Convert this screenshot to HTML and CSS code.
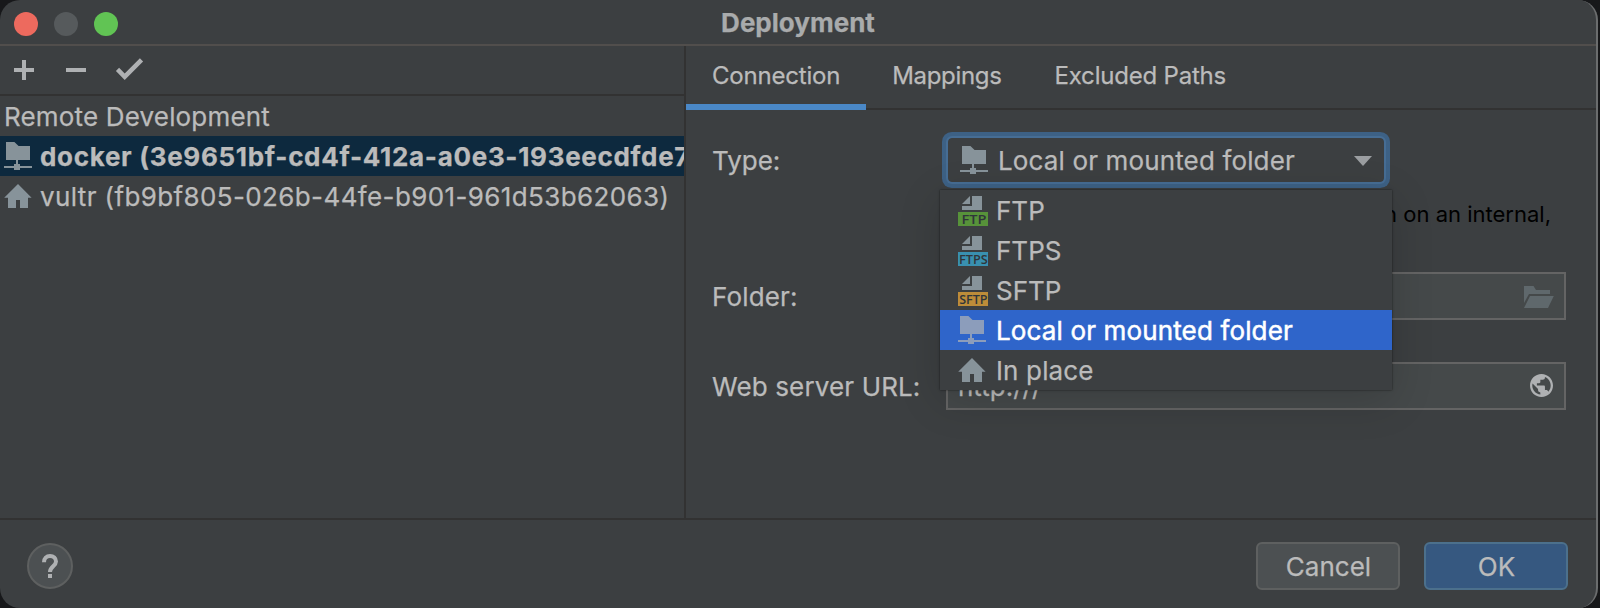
FILE: index.html
```
<!DOCTYPE html>
<html lang="en">
<head>
<meta charset="utf-8">
<title>Deployment</title>
<link rel="stylesheet" href="styles.css">
</head>
<body>
<svg class="defs" aria-hidden="true">
  <symbol id="i-mount" viewBox="0 0 16 16"><path d="M2 1h4.2l2.1 2H14v7H8v2h1v1h6v1H9v1H6v-1H1v-1h5v-1h1v-2H2z"/></symbol>
  <symbol id="i-home" viewBox="0 0 16 16"><path d="M8 2l6.8 6.9H13V14H9v-4H7v4H3V8.900H1.100z"/></symbol>
</svg>
<div class="window">
  <header class="titlebar">
    <div class="lights"><i class="light red"></i><i class="light gray"></i><i class="light green"></i></div>
    <h1 class="title">Deployment</h1>
  </header>
  <main class="main">
    <section class="sidebar">
      <div class="toolbar">
        <svg class="tool" viewBox="0 0 32 32"><path d="M14 6h4v8h8v4h-8v8h-4v-8H6v-4h8z"/></svg>
        <svg class="tool" viewBox="0 0 32 32"><path d="M6 14h20v4H6z"/></svg>
        <svg class="tool" viewBox="0 0 32 32"><path d="M3.900 17l3.200-3.200 5.600 5.600L27.900 4.200l3.200 3.200L12.700 26z"/></svg>
      </div>
      <div class="tree">
        <div class="node group"><span>Remote Development</span></div>
        <div class="node selected"><svg class="icon"><use href="#i-mount"/></svg><span>docker (3e9651bf-cd4f-412a-a0e3-193eecdfde7</span></div>
        <div class="node"><svg class="icon"><use href="#i-home"/></svg><span class="plain">vultr (fb9bf805-026b-44fe-b901-961d53b62063)</span></div>
      </div>
    </section>
    <section class="detail">
      <nav class="tabs"><a class="tab active">Connection</a><a class="tab mappings">Mappings</a><a class="tab last">Excluded Paths</a></nav>
      <div class="form">
        <div class="row">
          <label class="label"><span>Type:</span></label>
          <div class="select">
            <svg class="icon"><use href="#i-mount"/></svg><span class="wide">Local or mounted folder</span>
            <svg class="arrow" viewBox="0 0 18 10"><path d="M0 0h18L9 10z"/></svg>
            <div class="popup">
              <div class="option"><svg class="icon" viewBox="0 0 16 16"><path d="M3 5l4-4v4zM8 1h5v7H3V6h5z"/><path class="ftp" d="M1 9h15v7H1z"/><text x="2.700" y="14.850" textLength="12.500" lengthAdjust="spacingAndGlyphs">FTP</text></svg><span>FTP</span></div>
              <div class="option"><svg class="icon" viewBox="0 0 16 16"><path d="M3 5l4-4v4zM8 1h5v7H3V6h5z"/><path class="ftps" d="M1 9h15v7H1z"/><text x="1.500" y="14.850" textLength="14.400" lengthAdjust="spacingAndGlyphs">FTPS</text></svg><span>FTPS</span></div>
              <div class="option"><svg class="icon" viewBox="0 0 16 16"><path d="M3 5l4-4v4zM8 1h5v7H3V6h5z"/><path class="sftp" d="M1 9h15v7H1z"/><text x="1.600" y="14.850" textLength="14.200" lengthAdjust="spacingAndGlyphs">SFTP</text></svg><span>SFTP</span></div>
              <div class="option current"><svg class="icon"><use href="#i-mount"/></svg><span class="wide">Local or mounted folder</span></div>
              <div class="option"><svg class="icon"><use href="#i-home"/></svg><span class="wide">In place</span></div>
            </div>
          </div>
        </div>
        <p class="hint">n on an internal,</p>
        <div class="row folder-row">
          <label class="label"><span class="wide">Folder:</span></label>
          <div class="field"><svg class="browse" viewBox="0 0 30 22"><path d="M0 0h9.500l2.500 4h14v4H5L0 17zM6 10h23.800L24 22H0z"/></svg></div>
        </div>
        <div class="row">
          <label class="label"><span class="wide">Web server URL:</span></label>
          <div class="field"><span>http:///</span><svg class="globe" viewBox="2 2 20 20"><path d="M12 2C6.480 2 2 6.480 2 12s4.480 10 10 10 10-4.480 10-10S17.520 2 12 2zm-1 17.930c-3.950-.490-7-3.850-7-7.930 0-.620.080-1.210.210-1.790L9 15v1c0 1.100.900 2 2 2v1.930zm6.900-2.540c-.260-.810-1-1.390-1.900-1.390h-1v-3c0-.550-.450-1-1-1H8v-2h2c.550 0 1-.450 1-1V7h2c1.100 0 2-.900 2-2v-.410c2.930 1.190 5 4.060 5 7.410 0 2.080-.800 3.970-2.100 5.390z"/></svg></div>
        </div>
      </div>
    </section>
  </main>
  <footer class="footer">
    <button class="help" aria-label="Help"><svg viewBox="0 0 46 46"><path d="M17 19.200c0-3.800 2.500-6.200 6-6.200s6 2.300 6 5.600c0 4.400-6 5.200-6 10.400" fill="none" stroke="currentColor" stroke-width="4"/><path d="M21 31h4v4h-4z"/></svg></button>
    <div class="actions"><button class="btn"><span>Cancel</span></button><button class="btn primary"><span>OK</span></button></div>
  </footer>
</div>
</body>
</html>
```
FILE: styles.css
```
* { box-sizing: border-box; }
body { margin: 0; background: #17181a; font-family: Inter, "Liberation Sans", sans-serif; font-size: 26px; color: #bbbbbb; overflow: hidden; -webkit-text-stroke: .25px currentColor; }
.defs { display: none; }
span { display: inline-block; white-space: nowrap; padding-top: 1px; }
.wide { letter-spacing: .14px; }
.window { width: 1598px; height: 608px; display: flex; flex-direction: column; background: #3c3f41; border-right: 2px solid #6b6d6e; border-radius: 20px; overflow: hidden; }
.titlebar { height: 46px; flex: none; border-bottom: 2px solid #514e4c; display: grid; grid-template-columns: 1fr auto 1fr; align-items: start; }
.lights { display: flex; gap: 16px; padding: 12px 0 0 14px; }
.light { width: 24px; height: 24px; border-radius: 50%; }
.red { background: #ed6a5e; }
.gray { background: #565a5c; }
.green { background: #61c454; }
.title { margin: 0; font-size: 26px; line-height: 46px; height: 44px; font-weight: 700; color: #a9abac; }
.main { display: flex; height: 472px; flex: none; }
.sidebar { width: 686px; flex: none; border-right: 2px solid #323232; overflow: hidden; }
.toolbar { height: 50px; border-bottom: 2px solid #323232; display: flex; gap: 20px; padding: 8px 0 0 8px; }
.tool { width: 32px; height: 32px; fill: #afb1b3; }
.node { height: 40px; display: flex; align-items: center; padding-left: 2px; gap: 6px; line-height: 40px; }
.node span, .option span { padding-top: 2px; }
.group { padding-left: 4px; letter-spacing: .17px; }
.selected { background: #0d293e; font-weight: 700; letter-spacing: .69px; }
.plain { letter-spacing: .38px; }
.icon { width: 32px; height: 32px; flex: none; fill: #87939a; }
.detail { flex: 1; min-width: 0; }
.tabs { height: 64px; display: flex; border-bottom: 2px solid #323232; font-size: 24px; }
.tab { height: 64px; padding: 0 26px; line-height: 60px; letter-spacing: -.2px; }
.mappings { letter-spacing: -.33px; }
.last { padding-left: 27px; }
.active { border-bottom: 6px solid #4a88c7; }
.form { padding: 26px 30px 0 26px; }
.row { display: flex; height: 48px; align-items: center; }
.label { width: 234px; flex: none; }
.select { position: relative; width: 436px; height: 44px; margin-left: 2px; display: flex; align-items: center; gap: 8px; padding-left: 10px; border-radius: 4px; box-shadow: 0 0 0 2px #466d94, 0 0 0 6px #3d6185; }
.arrow { width: 18px; height: 10px; margin: 2px 12px 0 auto; fill: #9b9ea1; }
.popup { position: absolute; left: -8px; top: 52px; width: 452px; background: #3c3f41; box-shadow: 0 0 2px rgba(0,0,0,.6), 0 10px 40px rgba(0,0,0,.16); }
.option { display: flex; height: 40px; align-items: center; gap: 8px; padding-left: 16px; line-height: 40px; }
.icon text { font-family: "Open Sans", sans-serif; font-size: 6.3px; font-weight: 600; fill: #30353a; -webkit-text-stroke: 0; }
.icon .ftp { fill: #57923a; }
.icon .ftps { fill: #3990b0; }
.icon .sftp { fill: #bd8c39; }
.current { background: #2f65ca; color: #fff; -webkit-text-stroke-width: .5px; }
.current .icon { fill: #8c9dbb; }
.hint { margin: 14px 15px 0 0; height: 40px; line-height: 32px; font-size: 22px; text-align: right; color: #000; -webkit-text-stroke: 0; }
.folder-row { margin: 34px 0 42px; }
.field { flex: 1; height: 48px; border: 2px solid #646464; background: #45494a; display: flex; align-items: center; padding: 0 11px 0 10px; }
.browse { width: 30px; height: 22px; margin: 2px -1px 0 auto; fill: #5f686c; }
.globe { width: 23px; height: 23px; margin: -2px 0 0 auto; fill: #afb1b3; }
.footer { flex: 1; border-top: 2px solid #323232; display: flex; justify-content: space-between; padding: 22px 28px 0 27px; }
.help { width: 46px; height: 46px; margin-top: 1px; padding: 0; border: 2px solid #5e6060; border-radius: 50%; background: #4c5052; color: #afb1b3; }
.help svg { display: block; width: 46px; height: 46px; margin: -2px; fill: currentColor; }
.actions { display: flex; gap: 24px; }
.btn { width: 144px; height: 48px; padding: 0 0 0 1px; font: inherit; color: inherit; border: 2px solid #5e6060; border-radius: 6px; background: #4c5052; }
.primary { background: #365880; border-color: #4c708c; }
```
